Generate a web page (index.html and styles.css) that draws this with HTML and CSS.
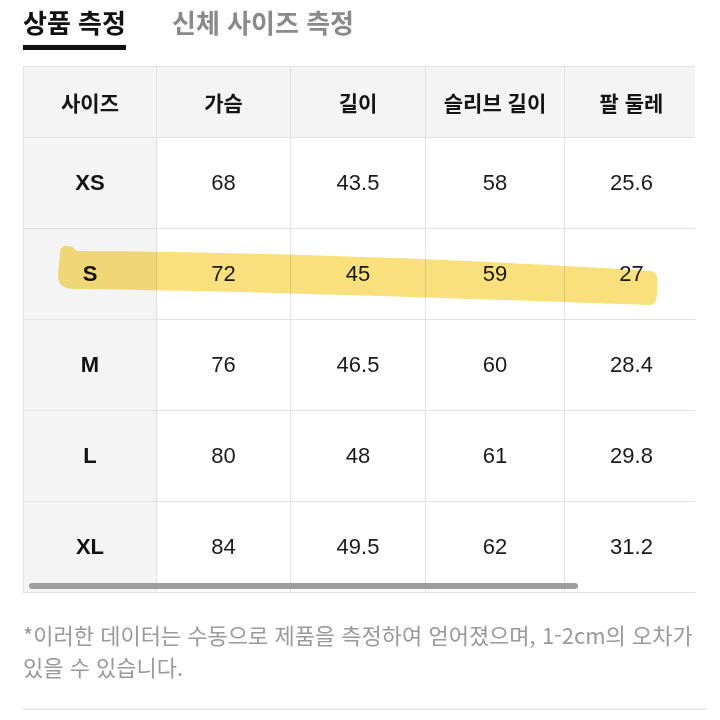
FILE: index.html
```html
<!DOCTYPE html>
<html lang="ko">
<head>
<meta charset="utf-8">
<link rel="stylesheet" href="styles.css">
</head>
<body>
<div class="page">
  <nav class="tabs">
    <div class="tab active">상품 측정</div>
    <div class="tab">신체 사이즈 측정</div>
  </nav>
  <div class="table-wrap">
    <table class="size-table">
      <thead>
        <tr><th>사이즈</th><th>가슴</th><th>길이</th><th>슬리브 길이</th><th>팔 둘레</th></tr>
      </thead>
      <tbody>
        <tr><td class="size">XS</td><td>68</td><td>43.5</td><td>58</td><td>25.6</td></tr>
        <tr><td class="size">S</td><td>72</td><td>45</td><td>59</td><td>27</td></tr>
        <tr><td class="size">M</td><td>76</td><td>46.5</td><td>60</td><td>28.4</td></tr>
        <tr><td class="size">L</td><td>80</td><td>48</td><td>61</td><td>29.8</td></tr>
        <tr><td class="size">XL</td><td>84</td><td>49.5</td><td>62</td><td>31.2</td></tr>
      </tbody>
    </table>
    <div class="scroll-thumb"></div>
  </div>
  <p class="note">*이러한 데이터는 수동으로 제품을 측정하여 얻어졌으며, 1-2cm의 오차가 있을 수 있습니다.</p>
  <hr class="divider">
  <svg class="highlight" width="720" height="720" viewBox="0 0 720 720" aria-hidden="true">
    <path d="M60 253 C60 246 66 244 72 247 L77 251 C250 252 450 258 651 271 C657 272 658 276 657 290 C657 300 656 305 649 305 C450 298 250 291 76 289 C63 289 58 285 58 275 Z" fill="#fae07c"/>
  </svg>
</div>
</body>
</html>
```

FILE: styles.css
```css
* { box-sizing: border-box; }
html, body { margin: 0; padding: 0; background: #fff; }
body {
  font-family: "Liberation Sans", "Noto Sans CJK KR", sans-serif;
  color: #111;
}
.page {
  position: relative;
  width: 720px;
  height: 720px;
  overflow: hidden;
  padding: 7px 0 0 23px;
}
.tabs {
  display: flex;
  gap: 46px;
}
.tab {
  font-family: "Noto Sans CJK KR", "Liberation Sans", sans-serif;
  font-size: 26px;
  font-weight: 700;
  line-height: 30px;
  color: #8a8a8a;
  padding-bottom: 8px;
  border-bottom: 5px solid transparent;
}
.tab.active {
  color: #111;
  border-bottom-color: #111;
}
.table-wrap {
  position: relative;
  margin-top: 16px;
  width: 672px;
  overflow: hidden;
}
.size-table {
  border-collapse: collapse;
  width: 675px;
  table-layout: fixed;
}
.size-table th,
.size-table td {
  border: 1px solid #e2e2e2;
  text-align: center;
  vertical-align: middle;
  padding: 0;
}
.size-table th:nth-child(1) { width: 133px; }
.size-table th:nth-child(2) { width: 134px; }
.size-table th:nth-child(3) { width: 135px; }
.size-table th:nth-child(4) { width: 139px; }
.size-table th:nth-child(5) { width: 134px; }
.size-table thead tr { height: 71px; }
.size-table tbody tr { height: 91px; }
.size-table th {
  background: #f4f4f4;
  font-family: "Noto Sans CJK KR", "Liberation Sans", sans-serif;
  font-size: 21px;
  font-weight: 700;
  color: #151515;
}
.size-table td {
  font-size: 22px;
  color: #1a1a1a;
}
.size-table td.size {
  background: #f4f4f4;
  font-weight: 700;
  color: #111;
}
.scroll-thumb {
  position: absolute;
  left: 6px;
  bottom: 4px;
  width: 549px;
  height: 6px;
  border-radius: 3px;
  background: #9d9d9d;
}
.note {
  margin: 25px 0 0;
  width: 680px;
  font-family: "Noto Sans CJK KR", "Liberation Sans", sans-serif;
  font-size: 22px;
  line-height: 32px;
  color: #9a9a9a;
  letter-spacing: 0;
  word-break: keep-all;
}
.divider {
  margin: 26px 0 0;
  width: 684px;
  border: 0;
  border-top: 2px solid #ececec;
}
.highlight {
  position: absolute;
  left: 0;
  top: 0;
  mix-blend-mode: multiply;
  pointer-events: none;
}
```
